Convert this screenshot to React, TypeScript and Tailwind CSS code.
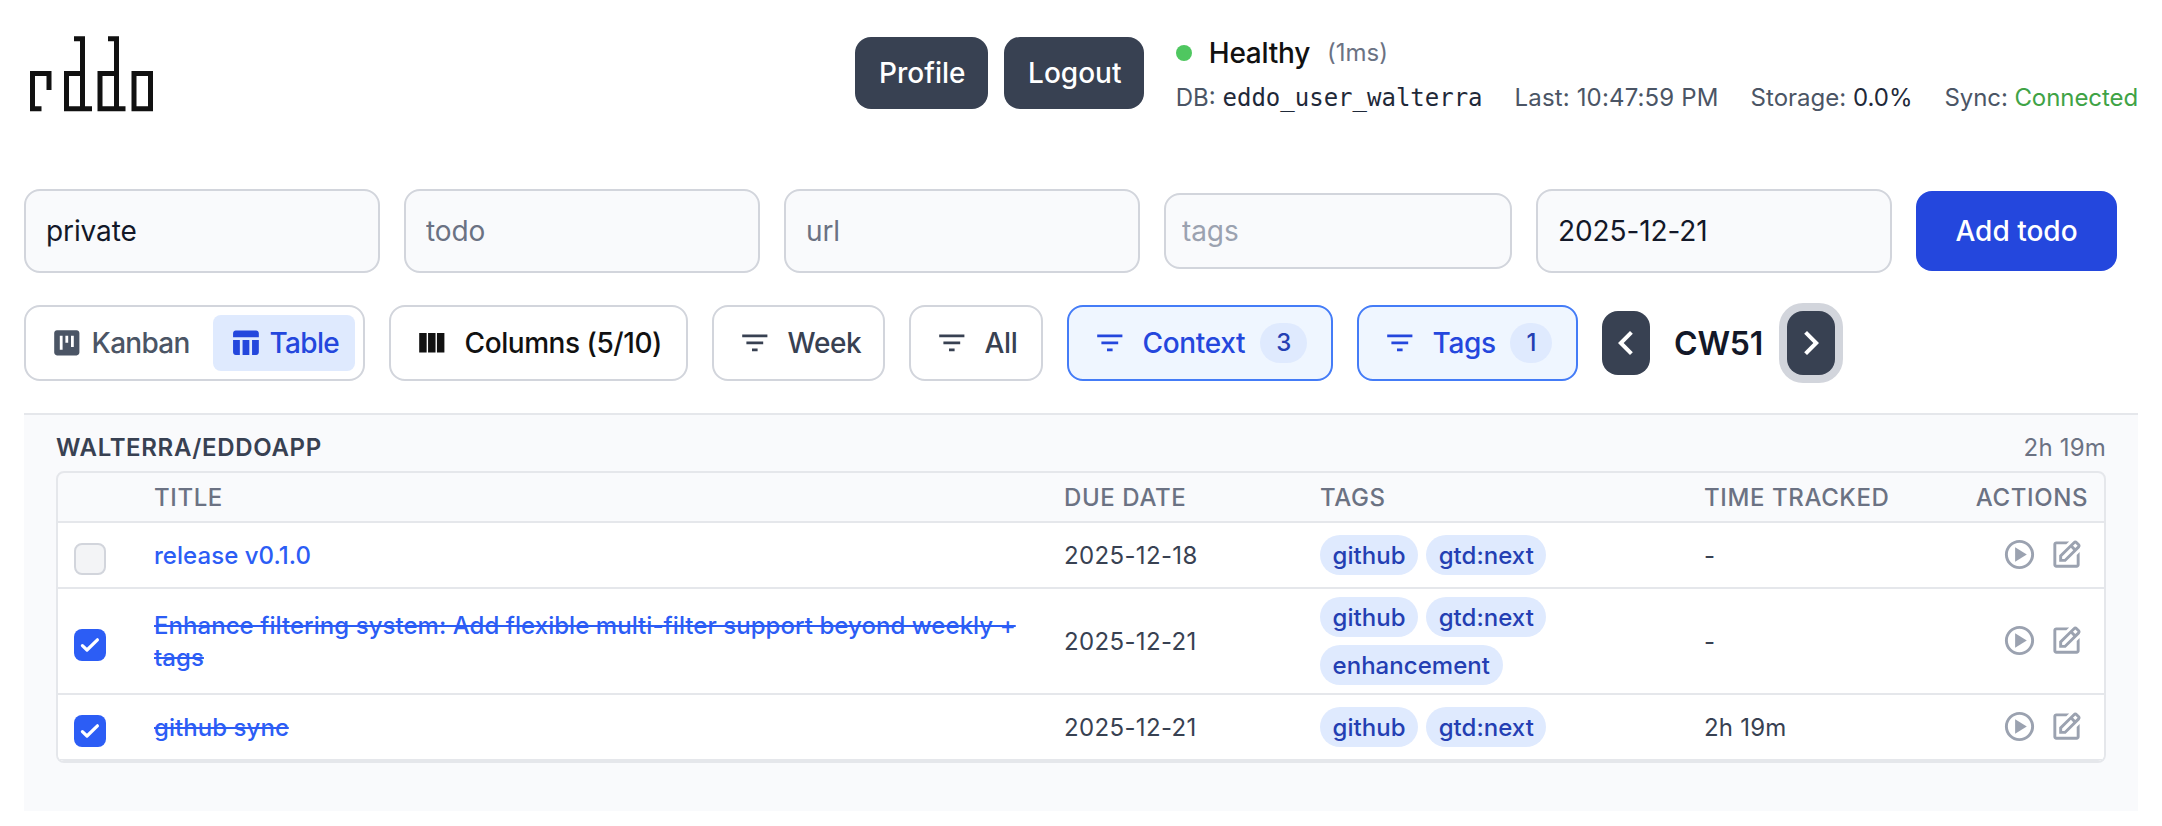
import React from "react"
import { BiEdit, BiPlayCircle } from "react-icons/bi"
import {
    MdChevronLeft,
    MdChevronRight,
    MdFilterList,
    MdTableChart,
    MdViewColumn,
    MdViewKanban,
} from "react-icons/md"

type Todo = {
    id: string
    title: string
    due: string
    tags: string[]
    tracked: string
    completed: boolean
}

const todos: Todo[] = [
    {
        id: "release",
        title: "release v0.1.0",
        due: "2025-12-18",
        tags: ["github", "gtd:next"],
        tracked: "-",
        completed: false,
    },
    {
        id: "filtering",
        title: "Enhance filtering system: Add flexible multi-filter support beyond weekly + tags",
        due: "2025-12-21",
        tags: ["github", "gtd:next", "enhancement"],
        tracked: "-",
        completed: true,
    },
    {
        id: "sync",
        title: "github sync",
        due: "2025-12-21",
        tags: ["github", "gtd:next"],
        tracked: "2h 19m",
        completed: true,
    },
]

const GRID = "grid grid-cols-[80px_910px_256px_384px_1fr_auto] items-center"

const Logo = () => (
    <svg
        width="132"
        height="80"
        viewBox="0 0 132 80"
        fill="none"
        stroke="#111111"
        strokeWidth="5"
        className="block"
    >
        <path d="M17.5 76.7H8.5V41.5H25V58" />
        <path d="M50 6.7H58.5V76.7H42.5V41.5H58.5M58.5 76.7H68" />
        <path d="M84 6.7H92.5V76.7H76V41.5H92.5M92.5 76.7H101.5" />
        <path d="M110 41.5H126.5V76.7H110Z" />
    </svg>
)

const HeaderButton = ({
    label,
    className,
}: {
    label: string
    className: string
}) => (
    <button
        className={`${className} h-[72px] rounded-2xl bg-[#384152] pl-0.5 text-[28px] font-medium text-white`}
    >
        {label}
    </button>
)

const HealthStatus = () => (
    <div className="flex flex-col">
        <div className="flex h-8 items-center">
            <span className="mr-[17px] size-4 rounded-full bg-[#4fc760]" />
            <span className="text-[28px] font-medium tracking-[-0.25px] text-[#111111]">
                Healthy
            </span>
            <span className="ml-[17px] text-2xl text-[#6b7283]">(1ms)</span>
        </div>
        <div className="mt-[13px] flex h-8 items-center gap-8 text-2xl whitespace-nowrap text-[#4b5565]">
            <span>
                DB:{" "}
                <span className="font-['DejaVu_Sans_Mono',monospace] text-[#1f2939]">
                    eddo_user_walterra
                </span>
            </span>
            <span className="tracking-[0.15px]">Last: 10:47:59 PM</span>
            <span>
                Storage: <span className="text-[#1f2939]">0.0%</span>
            </span>
            <span className="tracking-[-0.08px]">
                Sync: <span className="text-[#3fa346]">Connected</span>
            </span>
        </div>
    </div>
)

type FieldProps = {
    value?: string
    placeholder?: string
    className?: string
}

const Field = ({
    value,
    placeholder,
    className = "h-[84px] w-[356px] px-5 placeholder:text-[#6b7283]",
}: FieldProps) => (
    <input
        defaultValue={value}
        placeholder={placeholder}
        className={`${className} rounded-2xl border-2 border-[#d2d5dc] bg-[#f9fafc] text-[28px] tracking-[-0.1px] text-[#131828] outline-none`}
    />
)

type FilterButtonProps = {
    label: string
    count?: number
    className: string
}

const FilterButton = ({ label, count, className }: FilterButtonProps) => {
    const active = count !== undefined
    const color = active
        ? "border-[#447cf7] bg-[#eff6ff] text-[#2447dd]"
        : "border-[#d2d5dc] bg-white text-[#384152]"

    return (
        <button
            className={`${className} ${color} flex h-[76px] items-center rounded-2xl border-2 px-6 text-[28px] font-medium tracking-[-0.35px] whitespace-nowrap`}
        >
            <MdFilterList size={33.6} className="mr-4 shrink-0" />
            {label}
            {active && (
                <span className="ml-auto flex h-10 items-center rounded-full bg-[#dfeafe] px-4 text-2xl text-[#243fb3]">
                    {count}
                </span>
            )}
        </button>
    )
}

const Checkbox = ({ checked }: { checked: boolean }) =>
    checked ? (
        <span className="flex size-8 items-center justify-center rounded-lg bg-[#2c5df5]">
            <svg
                width="20"
                height="16"
                viewBox="0 0 20 16"
                fill="none"
                stroke="white"
                strokeWidth="3.2"
                strokeLinecap="round"
                strokeLinejoin="round"
            >
                <path d="M2.4 8.6L7 13L17.4 2.8" />
            </svg>
        </span>
    ) : (
        <span className="block size-8 rounded-lg border-2 border-[#d2d5dc] bg-[#f3f4f6]" />
    )

const TodoRow = ({ todo }: { todo: Todo }) => (
    <div
        className={`${GRID} min-h-[66px] border-b-2 border-[#e5e7eb] bg-white py-2 text-2xl text-[#384152]`}
    >
        <div className="px-4 pt-2">
            <Checkbox checked={todo.completed} />
        </div>
        <div
            className={`px-4 pt-0.5 leading-8 font-medium tracking-[0.05px] text-[#2c5df5] ${todo.completed ? "line-through" : ""}`}
        >
            {todo.title}
        </div>
        <div className="px-4 pt-0.5 tracking-[0.35px]">{todo.due}</div>
        <div className="flex flex-wrap gap-2 px-4">
            {todo.tags.map((tag) => (
                <span
                    key={tag}
                    className="rounded-full bg-[#dfeafe] px-[12.5px] pt-[5px] pb-[3px] leading-8 font-medium tracking-[0.05px] text-[#243fb3]"
                >
                    {tag}
                </span>
            ))}
        </div>
        <div className="px-4 pt-0.5 tracking-[0.2px]">{todo.tracked}</div>
        <div className="flex gap-3 pr-5 pb-0.5 text-[#9ba2b0]">
            <BiPlayCircle size={35} />
            <BiEdit size={35} />
        </div>
    </div>
)

const TodoTable = () => (
    <section className="h-[398px] border-t-2 border-[#e5e7eb] bg-[#f9fafc] px-8 pt-[17px]">
        <div className="flex h-8 items-center justify-between text-2xl">
            <h3 className="font-semibold tracking-[0.65px] text-[#384152]">
                WALTERRA/EDDOAPP
            </h3>
            <span className="tracking-[0.2px] text-[#6b7283]">2h 19m</span>
        </div>
        <div className="mt-[7px] overflow-hidden rounded-lg border-2 border-[#e5e7eb]">
            <div
                className={`${GRID} h-[50px] border-b-2 border-[#e5e7eb] pt-0.5 text-2xl font-medium tracking-[0.6px] text-[#6b7283]`}
            >
                <span />
                <span className="px-4">TITLE</span>
                <span className="px-4">DUE DATE</span>
                <span className="px-4">TAGS</span>
                <span className="px-4">TIME TRACKED</span>
                <span className="px-4">ACTIONS</span>
            </div>
            {todos.map((todo) => (
                <TodoRow key={todo.id} todo={todo} />
            ))}
        </div>
    </section>
)

export default function App() {
    return (
        <div className="h-[826px] overflow-hidden bg-white px-6 font-['Inter',sans-serif]">
            <header className="flex h-[189px] items-start justify-between pt-8">
                <Logo />
                <div className="flex items-start pt-[5px]">
                    <HeaderButton label="Profile" className="mr-4 w-[133px]" />
                    <HeaderButton label="Logout" className="mr-8 w-[140px]" />
                    <HealthStatus />
                </div>
            </header>

            <div className="flex h-[84px] items-center gap-6">
                <Field value="private" />
                <Field placeholder="todo" />
                <Field placeholder="url" />
                <Field
                    placeholder="tags"
                    className="h-[76px] w-[348px] px-4 placeholder:text-[#9ba2b0]"
                />
                <Field value="2025-12-21" />
                <button className="h-20 w-[201px] rounded-2xl bg-[#2447dd] text-[28px] font-medium text-white">
                    Add todo
                </button>
            </div>

            <div className="mt-8 flex h-[76px] items-center gap-6">
                <div className="flex h-[76px] w-[341px] items-center justify-between rounded-2xl border-2 border-[#d2d5dc] px-2 text-[28px] font-medium tracking-[-0.7px]">
                    <button className="flex h-14 items-center gap-2 px-4 text-[#4b5565]">
                        <MdViewKanban size={33.6} />
                        Kanban
                    </button>
                    <button className="flex h-14 w-[142px] items-center gap-2 rounded-lg bg-[#dfeafe] px-4 text-[#2447dd]">
                        <MdTableChart size={33.6} />
                        Table
                    </button>
                </div>
                <button className="flex h-[76px] w-[299px] items-center gap-4 rounded-2xl border-2 border-[#d2d5dc] px-6 text-[28px] font-medium tracking-[-0.45px] whitespace-nowrap text-[#111111]">
                    <MdViewColumn size={33.6} className="shrink-0" />
                    Columns (5/10)
                </button>
                <FilterButton label="Week" className="w-[173px]" />
                <FilterButton label="All" className="w-[134px]" />
                <FilterButton
                    label="Context"
                    count={3}
                    className="w-[266px]"
                />
                <FilterButton label="Tags" count={1} className="w-[221px]" />
                <button className="flex h-16 w-12 items-center justify-center rounded-2xl bg-[#384152] text-white">
                    <MdChevronLeft size={48} />
                </button>
                <span className="w-[89px] pt-0.5 text-[32px] font-semibold tracking-[-0.2px] text-[#131828]">
                    CW51
                </span>
                <button className="flex h-16 w-12 items-center justify-center rounded-2xl bg-[#384152] text-white ring-8 ring-[#d2d5dc]">
                    <MdChevronRight size={48} />
                </button>
            </div>

            <div className="mt-8">
                <TodoTable />
            </div>
        </div>
    )
}
